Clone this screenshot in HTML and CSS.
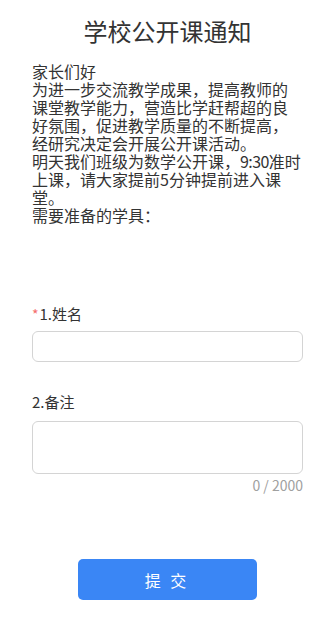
FILE: index.html
```html
<!DOCTYPE html>
<html lang="zh-CN">
<head>
<meta charset="utf-8">
<title>学校公开课通知</title>
<link rel="stylesheet" href="styles.css">
</head>
<body>
<div class="page">
  <h1 class="title">学校公开课通知</h1>
  <div class="notice">
    <p>家长们好</p>
    <p>为进一步交流教学成果，提高教师的课堂教学能力，营造比学赶帮超的良好氛围，促进教学质量的不断提高，经研究决定会开展公开课活动。</p>
    <p>明天我们班级为数学公开课，<span class="num">9:30</span>准时上课，请大家提前5分钟提前进入课堂。</p>
    <p>需要准备的学具：</p>
  </div>
  <form class="form">
    <div class="field">
      <label class="label"><span class="req">*</span>1.姓名</label>
      <input class="input" type="text">
    </div>
    <div class="field field-note">
      <label class="label">2.备注</label>
      <textarea class="textarea"></textarea>
      <div class="counter">0 / 2000</div>
    </div>
    <div class="actions">
      <button class="submit" type="button">提 交</button>
    </div>
  </form>
</div>
</body>
</html>
```
FILE: styles.css
```css
* { box-sizing: border-box; }
html, body { margin: 0; padding: 0; background: #fff; }
body {
  font-family: "Noto Sans CJK SC", "Noto Sans", sans-serif;
  color: #333;
}
.page { padding: 0 32px; }
.title {
  margin: 15px 0 0;
  font-size: 24px;
  line-height: 32px;
  font-weight: 400;
  text-align: center;
  color: #333;
}
.notice {
  margin-top: 15px;
  font-size: 16px;
  line-height: 18px;
}
.notice p { margin: 0; }
.num { letter-spacing: -0.6px; }
.form { margin-top: 80px; }
.label {
  display: block;
  font-size: 15px;
  line-height: 20px;
  color: #333;
}
.req { color: #f56c6c; font-size: 14px; margin-right: 1px; }
.input {
  display: block;
  width: 100%;
  height: 31px;
  margin-top: 7px;
  border: 1px solid #d4d4d4;
  border-radius: 6px;
  outline: none;
}
.field-note { margin-top: 30px; }
.textarea {
  display: block;
  width: 100%;
  height: 53px;
  margin-top: 9px;
  border: 1px solid #d4d4d4;
  border-radius: 6px;
  resize: none;
  outline: none;
}
.counter {
  margin-top: 2px;
  text-align: right;
  font-size: 14px;
  line-height: 18px;
  color: #a0a0a0;
}
.actions {
  display: flex;
  justify-content: center;
  margin-top: 65px;
}
.submit {
  width: 179px;
  height: 41px;
  border: none;
  border-radius: 5px;
  background: #3a86f5;
  color: #fff;
  font-family: "Noto Sans CJK SC", sans-serif;
  font-size: 16px;
  letter-spacing: 3px;
  padding-left: 5px;
}
```
